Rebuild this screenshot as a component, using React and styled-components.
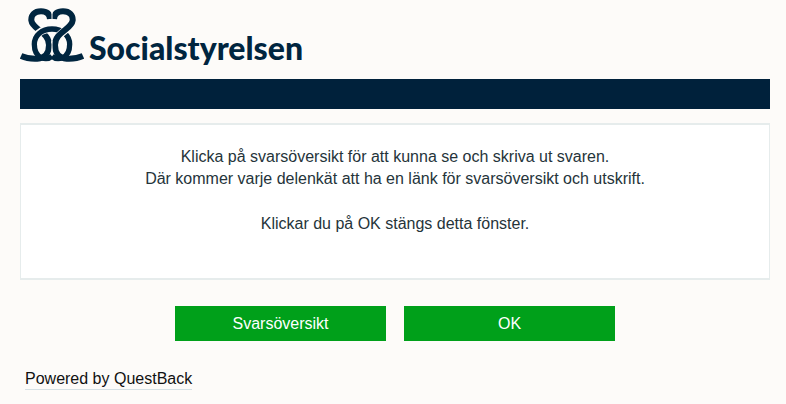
import React from 'react'
import styled, { createGlobalStyle } from 'styled-components'

const GlobalStyle = createGlobalStyle`
  body {
    margin: 0;
    background: #fdfbf9;
    color: #25343a;
    font-family: 'Liberation Sans', Arial, Helvetica, sans-serif;
    font-size: 16px;
    line-height: 22px;
  }
`

const Page = styled.div`
  padding: 8px 16px 8px 20px;
`

const Brand = styled.header`
  display: flex;
  align-items: flex-start;
  gap: 5px;
  height: 71px;
  color: #00253f;
`

const Wordmark = styled.span`
  margin-top: 20px;
  font-family: Lato, 'Open Sans', sans-serif;
  font-size: 32px;
  font-weight: 900;
  line-height: 40px;
`

const Banner = styled.div`
  height: 30px;
  background: #00213b;
`

const Panel = styled.main`
  margin-top: 14px;
  padding: 21px 16px 43px;
  border: 1px solid #e6ecec;
  border-width: 2px 1px;
  background: #fff;
  text-align: center;

  p {
    margin: 0 0 23px;
  }

  p:last-child {
    margin: 0;
  }
`

const Actions = styled.div`
  display: flex;
  justify-content: center;
  gap: 18px;
  margin-top: 26px;
`

const Button = styled.button`
  width: 211px;
  height: 35px;
  padding: 0;
  border: none;
  background: #00a01a;
  color: #fff;
  font: inherit;
  cursor: pointer;
`

const Footer = styled.footer`
  margin: 27px 5px 0;
`

const FooterLink = styled.a`
  display: inline-block;
  line-height: 20px;
  border-bottom: 1px solid #d5e0e4;
  color: #111;
  text-decoration: none;
`

const leftRibbon = 'M104 56C103 40 93 33 77 33C57 33 47 44 48 60C51 88 101 94 101 134C101 158 88 174 66 175C46 176 32 174 17 167'
const rightRibbon = 'M116 56C117 40 127 33 143 33C163 33 173 44 172 60C169 88 119 94 119 134C119 158 132 174 154 175C174 176 188 174 203 167'
const arch = 'M110 168C100 176 88 176 78 172C64 166 57 152 57 132C57 104 80 86 110 86C140 86 163 104 163 132C163 152 156 166 142 172C132 176 120 176 110 168'

function Logo() {
  return (
    <svg width="64" height="54" viewBox="15 23 190 162" fill="none" aria-hidden="true">
      <path d={leftRibbon} stroke="currentColor" strokeWidth="18" />
      {/* the arch passes over the left ribbon and under the right one */}
      <path d="M58 112C68 96 86 86 108 86" stroke="#fdfbf9" strokeWidth="22" />
      <path d={arch} stroke="currentColor" strokeWidth="16" />
      <path d="M171 66C164 88 122 98 119 130" stroke="#fdfbf9" strokeWidth="23" />
      <path d={rightRibbon} stroke="currentColor" strokeWidth="18" />
      <path d="M110 22V60M110 122V160" stroke="#fdfbf9" strokeWidth="3" />
    </svg>
  )
}

function App() {
  return (
    <>
      <GlobalStyle />
      <Page>
        <Brand>
          <Logo />
          <Wordmark>Socialstyrelsen</Wordmark>
        </Brand>
        <Banner />
        <Panel>
          <p>
            Klicka på svarsöversikt för att kunna se och skriva ut svaren.
            <br />
            Där kommer varje delenkät att ha en länk för svarsöversikt och utskrift.
          </p>
          <p>Klickar du på OK stängs detta fönster.</p>
        </Panel>
        <Actions>
          <Button type="button">Svarsöversikt</Button>
          <Button type="button" onClick={() => window.close()}>OK</Button>
        </Actions>
        <Footer>
          <FooterLink href="#questback">Powered by QuestBack</FooterLink>
        </Footer>
      </Page>
    </>
  )
}

export default App
